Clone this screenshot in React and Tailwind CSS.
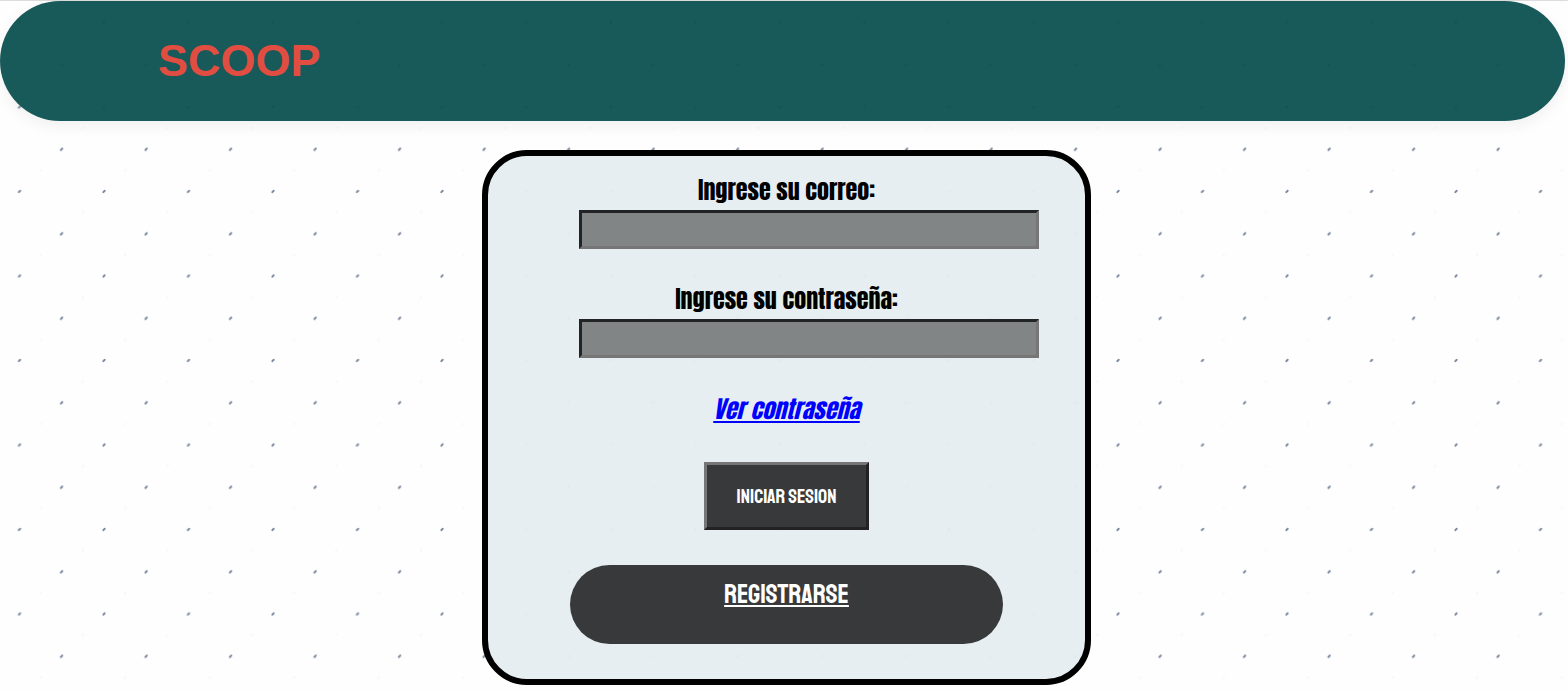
function DottedBackground() {
  return (
    <svg aria-hidden="true" className="absolute inset-0 -z-10 h-full w-full">
      <defs>
        <pattern id="dots" x="19.5" y="63.8" width="84.5" height="84.5" patternUnits="userSpaceOnUse">
          <path d="M41.4 85.2 42.8 83.8M41.4 .7 42.8 -.7" stroke="#78859c" strokeWidth="1.9" strokeLinecap="round" />
          <path d="M-.7 42.9 .7 41.5M83.8 42.9 85.2 41.5" stroke="#78859c" strokeWidth="1.9" strokeLinecap="round" />
          <path d="M62.8 64 64.2 62.6M20.6 21.8 22 20.4" stroke="#f8f8f8" strokeWidth="1.8" strokeLinecap="round" />
        </pattern>
      </defs>
      <rect width="100%" height="100%" fill="url(#dots)" />
    </svg>
  );
}

function Field({ id, label, type }) {
  return (
    <div className="flex w-full flex-col items-center">
      <label htmlFor={id} className="text-2xl leading-9">
        {label}
      </label>
      <input
        id={id}
        type={type}
        className="mt-0.5 ml-[45px] h-[39px] w-[77%] border-3 border-t-[#222325] border-r-[#767676] border-b-[#767676] border-l-[#222325] bg-[#828585] px-2 text-xl outline-none"
      />
    </div>
  );
}

export default function App() {
  return (
    <div className="relative isolate min-h-screen border-t border-[#dddddd] bg-[#fefefe] font-['Anton','Liberation_Sans_Narrow','Liberation_Sans',sans-serif] text-black">
      <DottedBackground />
      <header className="mr-[3px] flex h-[120px] items-center rounded-full bg-[#0f5252]/96 px-[158px] pb-0.5 shadow-[0_5px_15px_rgba(0,0,0,0.06)]">
        <h1 className="font-['Liberation_Sans',Arial,sans-serif] text-[45px] leading-none font-bold text-[#e24d42]">SCOOP</h1>
      </header>
      <main className="flex justify-center pt-[29px] pb-1 pl-[5px]">
        <form
          className="flex w-full max-w-[609px] flex-col items-center gap-8 rounded-[45px] border-6 border-black bg-[#e5edf0]/96 pt-4 pb-[35px]"
          onSubmit={(event) => event.preventDefault()}
        >
          <Field id="correo" label="Ingrese su correo:" type="email" />
          <Field id="contrasena" label="Ingrese su contraseña:" type="password" />
          <a href="#ver" className="text-2xl leading-[38px] text-[#0000ff] italic underline">
            Ver contraseña
          </a>
          <button
            type="submit"
            className="mt-0.5 h-[68px] border-3 border-t-[#767676] border-r-[#222222] border-b-[#222222] border-l-[#767676] bg-[#38393b] px-[29px] pt-0.5 font-['Staatliches','Bebas_Neue','Anton',sans-serif] text-xl text-white"
          >
            INICIAR SESION
          </button>
          <a
            href="#registrarse"
            className="mt-[3px] h-[79px] w-[433px] max-w-full rounded-full bg-[#38393b] pt-[10px] text-center font-['Staatliches','Bebas_Neue','Anton',sans-serif] text-[27px] leading-[38px] text-white underline"
          >
            REGISTRARSE
          </a>
        </form>
      </main>
    </div>
  );
}
